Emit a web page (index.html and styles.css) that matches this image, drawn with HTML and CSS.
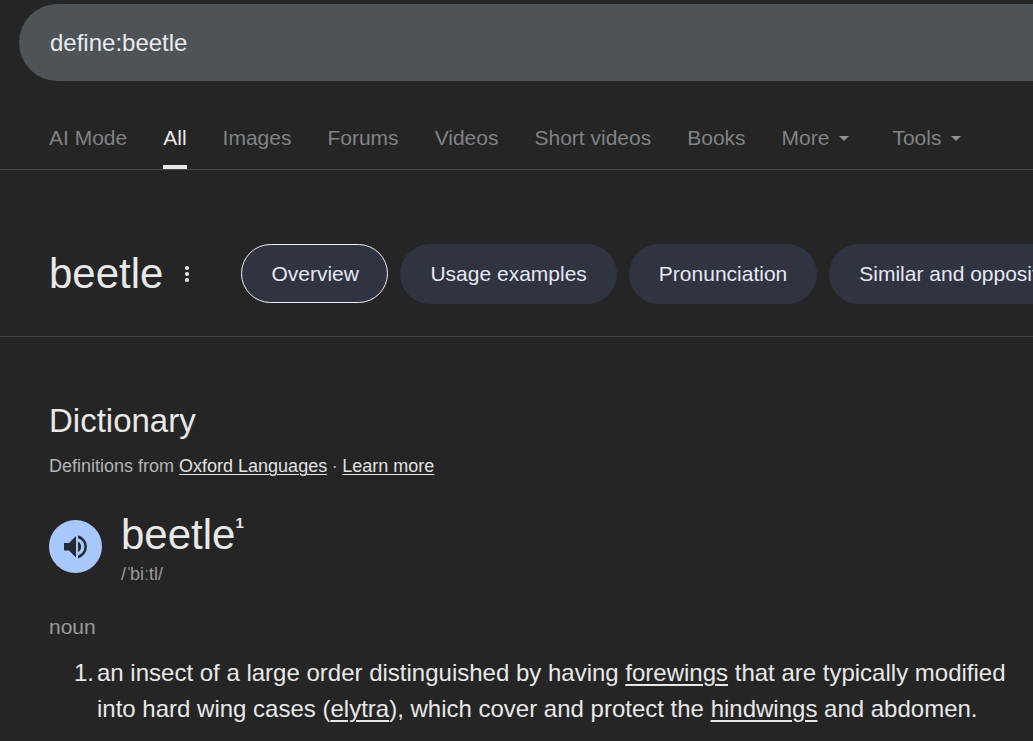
FILE: index.html
```html
<!DOCTYPE html>
<html lang="en">
<head>
<meta charset="utf-8">
<title>define:beetle</title>
<link rel="stylesheet" href="styles.css">
</head>
<body>
<div class="search">define:beetle</div>
<nav class="tabs">
  <span class="tab">AI Mode</span>
  <span class="tab active">All</span>
  <span class="tab">Images</span>
  <span class="tab">Forums</span>
  <span class="tab">Videos</span>
  <span class="tab">Short videos</span>
  <span class="tab">Books</span>
  <span class="tab menu">More<svg class="caret" viewBox="0 0 10 5"><path d="M0 0h10L5 5z"/></svg></span>
  <span class="tab menu tools">Tools<svg class="caret" viewBox="0 0 10 5"><path d="M0 0h10L5 5z"/></svg></span>
</nav>
<header class="topic">
  <h1 class="topic-title">beetle</h1>
  <svg class="dots" viewBox="0 0 6 18"><circle cx="3" cy="3" r="2.1"/><circle cx="3" cy="9" r="2.1"/><circle cx="3" cy="15" r="2.1"/></svg>
  <div class="chips">
    <span class="chip selected">Overview</span>
    <span class="chip">Usage examples</span>
    <span class="chip">Pronunciation</span>
    <span class="chip last">Similar and opposite words</span>
  </div>
</header>
<main class="dictionary">
  <h2 class="heading">Dictionary</h2>
  <p class="source">Definitions from <a class="link">Oxford Languages</a><span class="separator"> · </span><a class="link">Learn more</a></p>
  <div class="entry">
    <span class="speaker"><svg class="speaker-icon" viewBox="0 0 26 26"><path d="M1 9h5l7-7v21.500l-7-7H1z"/><path d="M15 7.500a6 6 0 0 1 0 10.500z"/><path d="M15 1.200a12 12 0 0 1 0 23.200v-3a9 9 0 0 0 0-17.200z"/></svg></span>
    <div class="word-block">
      <div class="word">beetle<sup class="index">1</sup></div>
      <div class="ipa">/<span class="stress">ˈ</span>biːtl/</div>
    </div>
  </div>
  <div class="pos">noun</div>
  <div class="sense">
    <span class="number">1.</span>
    <p class="meaning">an insect of a large order distinguished by having <a class="term">forewings</a> that are typically modified into hard wing cases (<a class="term">elytra</a>), which cover and protect the <a class="term">hindwings</a> and abdomen.</p>
  </div>
</main>
</body>
</html>
```
FILE: styles.css
```css
* { box-sizing: border-box; }
body {
  margin: 0;
  padding-top: 4px;
  height: 741px;
  overflow: hidden;
  background: #252525;
  color: #e8e8e8;
  font-family: "Liberation Sans", Arial, sans-serif;
}
h1, h2, p { margin: 0; font-weight: 400; }
.search {
  height: 77px;
  margin-left: 19px;
  padding-left: 31px;
  border-radius: 39px 0 0 39px;
  background: #4d5356;
  color: #e8eaed;
  font-size: 24px;
  line-height: 78px;
}
.tabs {
  display: flex;
  gap: 36px;
  height: 89px;
  padding: 27px 0 0 49px;
  border-bottom: 1px solid #4a4a4a;
  color: #7f8386;
  font-size: 21px;
  line-height: 60px;
  white-space: nowrap;
}
.tab { height: 61px; }
.active { color: #e8e8e8; border-bottom: 4px solid #e8e8e8; }
.menu { display: flex; align-items: flex-start; gap: 10px; }
.caret { width: 10px; height: 5px; margin-top: 28px; fill: #909497; }
.tools { margin-left: 7px; }
.topic {
  display: flex;
  align-items: flex-start;
  height: 167px;
  padding: 74px 0 0 49px;
  border-bottom: 1px solid #444;
}
.topic-title { font-size: 42px; line-height: 60px; }
.dots { flex: none; width: 6px; height: 18px; margin: 21px 0 0 21px; fill: #e8e8e8; }
.chips { display: flex; flex: 1; gap: 12px; min-width: 0; margin-left: 51px; overflow: hidden; white-space: nowrap; }
.chip {
  flex: none;
  height: 60px;
  padding: 0 30px;
  border-radius: 30px;
  background: #303340;
  color: #e5e7f5;
  font-size: 21px;
  line-height: 60px;
}
.selected { width: 147px; height: 59px; padding: 0 0 0 29px; border: 1px solid #f1f1f4; line-height: 58px; }
.dictionary { padding: 63px 0 0 49px; }
.heading { font-size: 33px; line-height: 42px; }
.source { margin-top: 12px; color: #b3b4b8; font-size: 18px; line-height: 24px; }
.link { color: #e2e2e2; text-decoration: underline; text-decoration-thickness: 1px; text-underline-offset: 2px; }
.separator { letter-spacing: -0.3px; }
.entry { display: flex; gap: 19px; margin-top: 32px; }
.speaker {
  display: flex;
  align-items: center;
  justify-content: center;
  width: 53px;
  height: 53px;
  margin-top: 10px;
  border-radius: 50%;
  background: #a8c7fa;
}
.speaker-icon { width: 26px; height: 26px; fill: #252b34; }
.word { font-size: 42px; line-height: 50px; }
.index { font-size: 15px; font-weight: 700; line-height: 0; vertical-align: 21px; }
.ipa { margin-top: 3px; color: #9a9a9a; font-size: 18px; line-height: 22px; }
.stress { letter-spacing: -2px; }
.pos { margin-top: 30px; color: #9a9a9a; font-size: 21px; line-height: 24px; }
.sense { display: flex; gap: 4px; margin-top: 16px; padding-left: 24px; font-size: 24px; line-height: 36px; }
.number { width: 20px; padding-left: 1px; }
.meaning { width: 930px; }
.term { text-decoration: underline; text-decoration-thickness: 2px; text-underline-offset: 3px; }
```
